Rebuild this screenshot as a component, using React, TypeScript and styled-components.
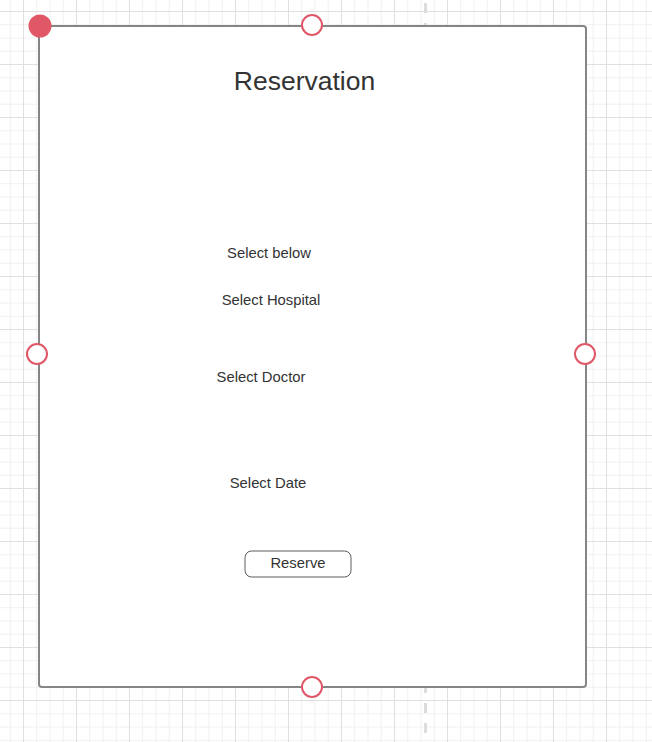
import React from "react";
import styled, { createGlobalStyle } from "styled-components";

const GlobalStyle = createGlobalStyle`
  html, body {
    margin: 0;
    padding: 0;
    background: #fff;
  }
  body {
    font-family: "Liberation Sans", Arial, sans-serif;
    color: #333;
  }
`;

interface NodeSpec {
  id: string;
  text: string;
  x: number; // centre, relative to the frame
  y: number;
}

// diagram nodes inside the wireframe
const labels: NodeSpec[] = [
  { id: "below", text: "Select below", x: 229, y: 225.5 },
  { id: "hospital", text: "Select Hospital", x: 231, y: 272.5 },
  { id: "doctor", text: "Select Doctor", x: 221, y: 349.5 },
  { id: "date", text: "Select Date", x: 228, y: 455.5 },
];

const handles = [
  { id: "top", x: 312, y: 25 },
  { id: "left", x: 37, y: 354 },
  { id: "right", x: 585, y: 354 },
  { id: "bottom", x: 312, y: 687 },
];

export default function App() {
  return (
    <>
      <GlobalStyle />
      <Canvas>
        <GuideLine />
        <Frame>
          <Title>Reservation</Title>
          {labels.map((l) => (
            <Label key={l.id} style={{ left: l.x, top: l.y }}>
              {l.text}
            </Label>
          ))}
          <ReserveButton style={{ left: 258, top: 536.5 }}>Reserve</ReserveButton>
        </Frame>
        <Handle $filled style={{ left: 40, top: 26 }} />
        {handles.map((h) => (
          <Handle key={h.id} style={{ left: h.x, top: h.y }} />
        ))}
      </Canvas>
    </>
  );
}

const Canvas = styled.div`
  position: relative;
  width: 652px;
  height: 742px;
  overflow: hidden;
  box-sizing: border-box;
  padding: 25px 0 0 38px;
  background-color: #fff;
  background-image: linear-gradient(to right, #e0e0e0 1px, transparent 1px),
    linear-gradient(to bottom, #e0e0e0 1px, transparent 1px),
    linear-gradient(to right, #f0f0f0 1px, transparent 1px),
    linear-gradient(to bottom, #f0f0f0 1px, transparent 1px);
  background-size: 53px 53px, 53px 53px, 13.25px 13.25px, 13.25px 13.25px;
  background-position: 23px 11px, 23px 11px, 9.75px 11px, 9.75px 11px;
`;

const GuideLine = styled.div`
  position: absolute;
  left: 424px;
  top: 3px;
  bottom: 0;
  width: 3px;
  background: repeating-linear-gradient(
    to bottom,
    #dcdcdc 0 10px,
    transparent 10px 20px
  );
`;

const Frame = styled.div`
  position: relative;
  z-index: 1;
  box-sizing: border-box;
  width: 549px;
  height: 663px;
  background: #fff;
  border: 2px solid #858585;
  border-radius: 4px;
`;

const Title = styled.div`
  position: absolute;
  left: 264.5px;
  top: 54px;
  transform: translate(-50%, -50%);
  font-size: 26.5px;
  color: #333;
  white-space: nowrap;
`;

const Label = styled.div`
  position: absolute;
  transform: translate(-50%, -50%);
  font-size: 14.8px;
  color: #333;
  white-space: nowrap;
`;

const ReserveButton = styled.div`
  position: absolute;
  transform: translate(-50%, -50%);
  box-sizing: border-box;
  width: 107px;
  height: 27px;
  border: 1.5px solid #5a5a5a;
  border-radius: 7px;
  display: flex;
  align-items: center;
  justify-content: center;
  padding-bottom: 3px;
  font-size: 14.8px;
  color: #333;
  background: #fff;
`;

const Handle = styled.div<{ $filled?: boolean }>`
  position: absolute;
  z-index: 2;
  box-sizing: border-box;
  width: ${(p) => (p.$filled ? 23 : 22)}px;
  height: ${(p) => (p.$filled ? 23 : 22)}px;
  transform: translate(-50%, -50%);
  border-radius: 50%;
  border: 2px solid #e05867;
  background: ${(p) => (p.$filled ? "#e05867" : "#fff")};
`;
